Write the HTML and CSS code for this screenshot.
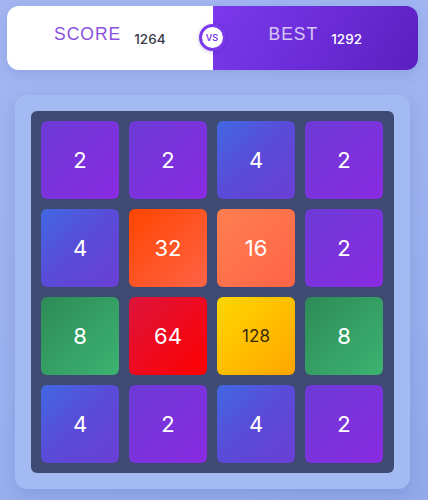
FILE: index.html
```html
<!DOCTYPE html>
<html lang="en">
<head>
<meta charset="utf-8">
<title>2048</title>
<link rel="stylesheet" href="styles.css">
</head>
<body>
  <div class="page">
    <header class="scorebar">
      <div class="side side-score">
        <span class="label">SCORE</span>
        <span class="value">1264</span>
      </div>
      <div class="side side-best">
        <span class="label">BEST</span>
        <span class="value">1292</span>
      </div>
      <div class="vs">VS</div>
    </header>

    <main class="board">
      <div class="grid">
        <div class="tile t2">2</div>
        <div class="tile t2">2</div>
        <div class="tile t4">4</div>
        <div class="tile t2">2</div>

        <div class="tile t4">4</div>
        <div class="tile t32">32</div>
        <div class="tile t16">16</div>
        <div class="tile t2">2</div>

        <div class="tile t8">8</div>
        <div class="tile t64">64</div>
        <div class="tile t128">128</div>
        <div class="tile t8">8</div>

        <div class="tile t4">4</div>
        <div class="tile t2">2</div>
        <div class="tile t4">4</div>
        <div class="tile t2">2</div>
      </div>
    </main>
  </div>
</body>
</html>
```
FILE: styles.css
```css
* {
  box-sizing: border-box;
}

html,
body {
  margin: 0;
  height: 100%;
}

body {
  background: linear-gradient(160deg, #a3b6f1 0%, #9cb2ef 60%, #93a9ea 100%);
  font-family: "Inter", "Liberation Sans", sans-serif;
  overflow: hidden;
}

.page {
  padding: 6px 10px 0 7px;
}

/* score header */
.scorebar {
  position: relative;
  display: flex;
  height: 64px;
  border-radius: 12px;
  box-shadow: 0 4px 14px rgba(80, 90, 170, 0.18);
}

.side {
  flex: 1;
  display: flex;
  align-items: center;
  justify-content: center;
  gap: 13px;
}

.side-score {
  background: #ffffff;
  border-radius: 12px 0 0 12px;
}

.side-best {
  background: linear-gradient(120deg, #7a3aec 0%, #6a2bd6 55%, #5a1fbf 100%);
  border-radius: 0 12px 12px 0;
}

.label {
  font-family: "Liberation Sans", "Inter", sans-serif;
  font-size: 17.5px;
  font-weight: 400;
  letter-spacing: 1px;
  margin-bottom: 7px;
}

.value {
  font-size: 13.5px;
  font-weight: 500;
  margin-top: 1px;
}

.side-score .label {
  color: #8b4fe0;
}

.side-score .value {
  color: #3a3a48;
}

.side-best .label {
  color: #d8c8f5;
}

.side-best .value {
  color: #ffffff;
}

.vs {
  position: absolute;
  left: 50%;
  top: 50%;
  width: 27px;
  height: 27px;
  margin: -14px 0 0 -14px;
  border-radius: 50%;
  background: #ffffff;
  border: 3px solid #7b3aea;
  color: #7b3aea;
  font-size: 9px;
  font-weight: 600;
  display: flex;
  align-items: center;
  justify-content: center;
  box-shadow: 0 1px 4px rgba(60, 20, 140, 0.25);
}

/* board */
.board {
  width: 395px;
  margin: 25px 0 0 8px;
  padding: 16px;
  background: #a4baf2;
  border-radius: 12px;
  box-shadow: 0 6px 18px rgba(70, 90, 170, 0.22);
}

.grid {
  display: grid;
  grid-template-columns: repeat(4, 78px);
  grid-auto-rows: 78px;
  gap: 10px;
  padding: 10px;
  background: #3f4a72;
  border-radius: 6px;
}

.tile {
  display: flex;
  align-items: center;
  justify-content: center;
  border-radius: 6px;
  color: #ffffff;
  font-size: 22px;
  font-weight: 400;
}

.t2 {
  background: linear-gradient(135deg, #6c3ad6 0%, #8a2be2 100%);
}

.t4 {
  background: linear-gradient(135deg, #4169e1 0%, #5a4ad8 50%, #6a3fd6 100%);
}

.t8 {
  background: linear-gradient(135deg, #2e8b57 0%, #3cb371 100%);
}

.t16 {
  background: linear-gradient(135deg, #ff7f50 0%, #ff6347 100%);
}

.t32 {
  background: linear-gradient(135deg, #ff4500 0%, #ff6347 100%);
}

.t64 {
  background: linear-gradient(135deg, #dc143c 0%, #ff0000 100%);
}

.t128 {
  background: linear-gradient(135deg, #ffd700 0%, #ffa500 100%);
  color: #3a2a05;
  font-size: 17px;
}
```
